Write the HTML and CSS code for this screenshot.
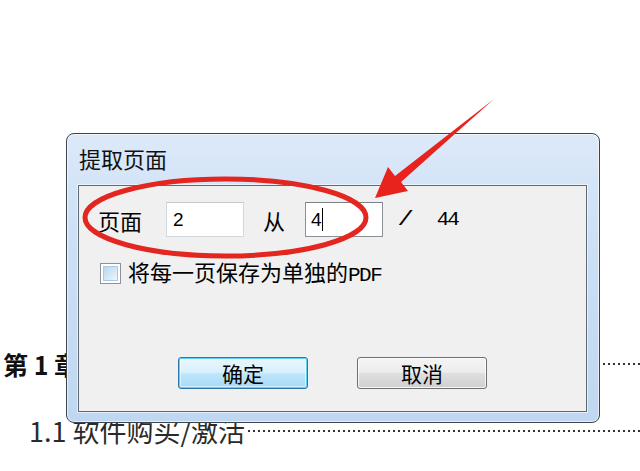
FILE: index.html
```html
<!DOCTYPE html>
<html lang="zh-CN">
<head>
<meta charset="utf-8">
<title>提取页面</title>
<link rel="stylesheet" href="styles.css">
</head>
<body>
<div class="page">
  <div class="doc">
    <div class="toc-row toc-chapter">
      <span class="toc-title">第 1 章</span>
      <span class="leader leader-chapter"></span>
    </div>
    <div class="toc-row toc-section">
      <span class="toc-title">1.1 软件购买/激活</span>
      <span class="leader leader-section"></span>
    </div>
  </div>

  <div class="dialog">
    <div class="dialog-title">提取页面</div>
    <div class="client">
      <div class="range-row">
        <span class="label">页面</span>
        <div class="field field-from"><span class="field-text">2</span></div>
        <span class="label label-to">从</span>
        <div class="field field-to"><span class="field-text">4</span><span class="caret"></span></div>
        <span class="mono slash">/</span>
        <span class="mono total">44</span>
      </div>
      <div class="check-row">
        <span class="checkbox"></span>
        <span class="check-text">将每一页保存为单独的<span class="mono-inline">PDF</span></span>
      </div>
      <div class="button-row">
        <button class="btn btn-default" type="button">确定</button>
        <button class="btn btn-cancel" type="button">取消</button>
      </div>
    </div>
  </div>

  <svg class="annotations" viewBox="0 0 640 471" width="640" height="471" xmlns="http://www.w3.org/2000/svg">
    <ellipse cx="225.5" cy="217.5" rx="140.5" ry="38.5" fill="none" stroke="#e3261f" stroke-width="5"/>
    <polygon points="494,99 401,182 408,191 375,198 388,167 395,176" fill="#e8231d"/>
  </svg>
</div>
</body>
</html>
```

FILE: styles.css
```css
html, body {
  margin: 0;
  padding: 0;
  background: #ffffff;
}

body {
  width: 640px;
  height: 471px;
  overflow: hidden;
  font-family: "Noto Sans CJK SC", "Noto Sans", sans-serif;
  color: #000;
}

.page {
  position: relative;
  width: 640px;
  height: 471px;
}

/* background document (table of contents) */
.doc {
  padding-top: 351px;
  display: flex;
  flex-direction: column;
  gap: 40px;
}

.toc-row {
  display: flex;
  align-items: flex-start;
}

.toc-chapter {
  padding-left: 3px;
  font-size: 25px;
  line-height: 26px;
  font-weight: 700;
  color: #111;
}

.toc-section {
  padding-left: 29px;
  font-size: 27px;
  line-height: 28px;
  color: #2a2a2a;
}

.toc-title {
  white-space: nowrap;
}

.leader {
  flex: 1;
  height: 2px;
  background-image: linear-gradient(to right, #333 2px, transparent 2px);
  background-size: 5px 2px;
  background-repeat: repeat-x;
}

.leader-chapter {
  margin-top: 12px;
  margin-left: 4px;
}

.leader-section {
  margin-top: 13px;
  margin-left: 3px;
}

/* dialog window */
.dialog {
  position: absolute;
  left: 66px;
  top: 133px;
  width: 534px;
  height: 290px;
  box-sizing: border-box;
  border: 1px solid #3b444d;
  border-radius: 8px;
  background: linear-gradient(180deg, #dce9f9 0%, #cde0f5 35%, #bfd7f1 100%);
  box-shadow: inset 0 0 0 1px rgba(255, 255, 255, 0.6);
  padding: 14px 12px 10px 11px;
  display: flex;
  flex-direction: column;
}

.dialog-title {
  height: 20px;
  padding-left: 1px;
  font-size: 22px;
  line-height: 20px;
  color: #111;
  margin-bottom: 17px;
}

.client {
  flex: 1;
  border: 1px solid #5f6a75;
  background: #f0f0f0;
  box-shadow: 0 0 0 1px rgba(255, 255, 255, 0.55);
  padding: 16px 0 0 19px;
  display: flex;
  flex-direction: column;
}

.range-row {
  display: flex;
  align-items: center;
  height: 35px;
}

.label {
  font-size: 22px;
  line-height: 22px;
  color: #000;
}

.label-to {
  margin-left: 19px;
}

.field {
  width: 78px;
  height: 35px;
  box-sizing: border-box;
  background: #ffffff;
  display: flex;
  align-items: center;
}

.field-from {
  margin-left: 24px;
  border: 1px solid #d3d6da;
  border-top-color: #c4c8cd;
  padding-left: 6px;
}

.field-to {
  margin-left: 20px;
  border: 1px solid #8b9097;
  border-top-color: #7b8087;
  padding-left: 5px;
}

.field-text {
  font-family: "Liberation Sans", "DejaVu Sans", sans-serif;
  font-size: 19px;
  line-height: 22px;
  color: #000;
}

.caret {
  width: 1px;
  height: 23px;
  background: #000;
}

.mono {
  font-family: "Liberation Mono", "DejaVu Sans Mono", monospace;
  font-size: 21px;
  line-height: 22px;
  color: #000;
}

.slash {
  margin-left: 16px;
  font-weight: 700;
  font-style: italic;
}

.total {
  margin-left: 25px;
  letter-spacing: -2px;
}

.check-row {
  margin-top: 25px;
  height: 22px;
  display: flex;
  align-items: center;
}

.checkbox {
  margin-left: 2px;
  width: 21px;
  height: 21px;
  box-sizing: border-box;
  border: 1px solid #8e9399;
  background: #ffffff;
  padding: 2px;
  display: flex;
}

.checkbox::before {
  content: "";
  flex: 1;
  border: 1px solid #a9c9e6;
  background: linear-gradient(135deg, #b7d6f0 0%, #d5e8f7 55%, #eef6fd 100%);
}

.check-text {
  margin-left: 7px;
  font-size: 22px;
  line-height: 22px;
  color: #000;
  white-space: nowrap;
}

.mono-inline {
  font-family: "Liberation Mono", "DejaVu Sans Mono", monospace;
  font-size: 21px;
  letter-spacing: -1.5px;
}

.button-row {
  margin-top: 73px;
  display: flex;
}

.btn {
  width: 130px;
  height: 32px;
  box-sizing: border-box;
  padding: 0;
  border-radius: 3px;
  font-family: "Noto Sans CJK SC", sans-serif;
  font-size: 21px;
  line-height: 28px;
  color: #000;
}

.btn-default {
  margin-left: 80px;
  border: 1px solid #2c77ad;
  background: linear-gradient(180deg, #eaf6fd 0%, #d9f0fc 48%, #bee6fd 52%, #a7d9f5 100%);
  box-shadow: inset 0 0 0 1px #5fd0f3, inset 0 0 0 2px rgba(255, 255, 255, 0.5);
}

.btn-cancel {
  margin-left: 49px;
  border: 1px solid #6f6f6f;
  background: linear-gradient(180deg, #f4f4f4 0%, #ececec 48%, #dedede 52%, #d0d0d0 100%);
  box-shadow: inset 0 0 0 1px rgba(255, 255, 255, 0.8);
}

/* hand-drawn annotations over the screenshot */
.annotations {
  position: absolute;
  left: 0;
  top: 0;
  pointer-events: none;
}
```
